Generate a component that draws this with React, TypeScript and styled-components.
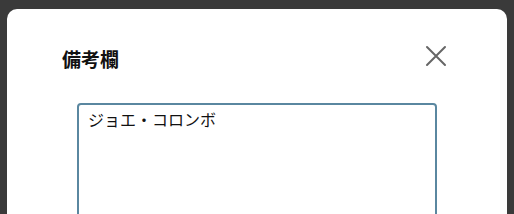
import { useEffect, useRef } from "react";
import styled, { createGlobalStyle } from "styled-components";

const GlobalStyle = createGlobalStyle`
  html, body {
    margin: 0;
    padding: 0;
    background: #3a3a3a;
    font-family: "Noto Sans CJK JP", "Noto Sans", sans-serif;
  }
`;

const NOTE = "ジョエ・コロンボ";

const App = () => {
  const ref = useRef<HTMLTextAreaElement>(null);

  useEffect(() => {
    const el = ref.current;
    if (el) {
      el.focus();
      el.setSelectionRange(NOTE.length, NOTE.length);
    }
  }, []);

  return (
    <Backdrop>
      <GlobalStyle />
      <Modal>
        <ModalHeader>
          <Title>備考欄</Title>
          <CloseButton aria-label="閉じる">
            <svg width="22" height="22" viewBox="0 0 22 22">
              <path
                d="M2 2 L20 20 M20 2 L2 20"
                stroke="#666"
                strokeWidth="2"
                strokeLinecap="round"
                fill="none"
              />
            </svg>
          </CloseButton>
        </ModalHeader>
        <ModalBody>
          <NoteArea ref={ref} defaultValue={NOTE} />
        </ModalBody>
      </Modal>
    </Backdrop>
  );
};

export default App;

const Backdrop = styled.div`
  width: 514px;
  height: 214px;
  overflow: hidden;
  padding: 9px 7px 0 7px;
  box-sizing: border-box;
  background: #3a3a3a;
`;

const Modal = styled.div`
  width: 500px;
  height: 260px;
  background: #fff;
  border-radius: 10px;
  padding-top: 32px;
  box-sizing: border-box;
`;

const ModalHeader = styled.div`
  display: flex;
  align-items: center;
  justify-content: space-between;
  padding: 0 53px 0 55px;
  height: 36px;
`;

const Title = styled.h2`
  margin: 0;
  font-size: 19px;
  font-weight: 700;
  line-height: 36px;
  color: #111;
`;

const CloseButton = styled.button`
  width: 36px;
  height: 36px;
  margin-bottom: 6px;
  padding: 0;
  border: none;
  background: none;
  display: flex;
  align-items: center;
  justify-content: center;
  cursor: pointer;
`;

const ModalBody = styled.div`
  padding: 26px 70px 0 70px;
`;

const NoteArea = styled.textarea`
  display: block;
  width: 360px;
  height: 200px;
  box-sizing: border-box;
  border: 2px solid #5a87a0;
  border-radius: 4px;
  padding: 2px 9px;
  font-family: "Noto Sans CJK JP", "Noto Sans", sans-serif;
  font-size: 16px;
  line-height: 24px;
  color: #111;
  caret-color: #000;
  resize: none;
  outline: none;
`;
